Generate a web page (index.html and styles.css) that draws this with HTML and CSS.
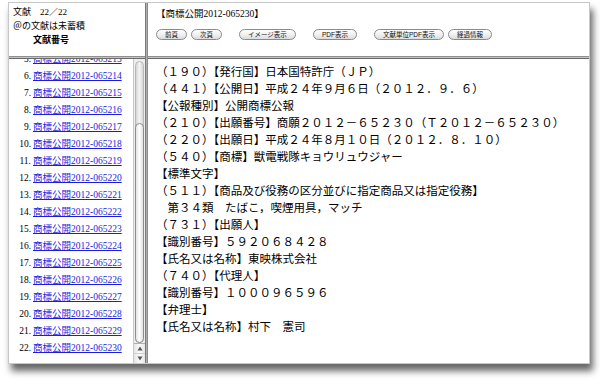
FILE: index.html
```html
<!DOCTYPE html>
<html lang="ja">
<head>
<meta charset="utf-8">
<link rel="stylesheet" href="styles.css">
</head>
<body>
<div class="window">
  <div class="left-col">
    <div class="doc-info">
      <div class="info-line">文献　22／22</div>
      <div class="info-line">＠の文献は未蓄積</div>
      <div class="info-line info-head">文献番号</div>
    </div>
    <div class="hdiv"></div>
    <div class="list-frame">
      <div class="list-view">
        <div class="list">
          <div class="item"><span class="num">5.</span><a class="doc-link" href="#">商標公開2012-065213</a></div>
          <div class="item"><span class="num">6.</span><a class="doc-link" href="#">商標公開2012-065214</a></div>
          <div class="item"><span class="num">7.</span><a class="doc-link" href="#">商標公開2012-065215</a></div>
          <div class="item"><span class="num">8.</span><a class="doc-link" href="#">商標公開2012-065216</a></div>
          <div class="item"><span class="num">9.</span><a class="doc-link" href="#">商標公開2012-065217</a></div>
          <div class="item"><span class="num">10.</span><a class="doc-link" href="#">商標公開2012-065218</a></div>
          <div class="item"><span class="num">11.</span><a class="doc-link" href="#">商標公開2012-065219</a></div>
          <div class="item"><span class="num">12.</span><a class="doc-link" href="#">商標公開2012-065220</a></div>
          <div class="item"><span class="num">13.</span><a class="doc-link" href="#">商標公開2012-065221</a></div>
          <div class="item"><span class="num">14.</span><a class="doc-link" href="#">商標公開2012-065222</a></div>
          <div class="item"><span class="num">15.</span><a class="doc-link" href="#">商標公開2012-065223</a></div>
          <div class="item"><span class="num">16.</span><a class="doc-link" href="#">商標公開2012-065224</a></div>
          <div class="item"><span class="num">17.</span><a class="doc-link" href="#">商標公開2012-065225</a></div>
          <div class="item"><span class="num">18.</span><a class="doc-link" href="#">商標公開2012-065226</a></div>
          <div class="item"><span class="num">19.</span><a class="doc-link" href="#">商標公開2012-065227</a></div>
          <div class="item"><span class="num">20.</span><a class="doc-link" href="#">商標公開2012-065228</a></div>
          <div class="item"><span class="num">21.</span><a class="doc-link" href="#">商標公開2012-065229</a></div>
          <div class="item"><span class="num">22.</span><a class="doc-link" href="#">商標公開2012-065230</a></div>
        </div>
      </div>
      <div class="scrollbar">
        <div class="track">
          <div class="thumb"></div>
        </div>
        <div class="arrow arrow-up"><svg width="6" height="5" viewBox="0 0 6 5"><path d="M3 0.5 L5.5 4.5 L0.5 4.5 Z" fill="#555"/></svg></div>
        <div class="arrow arrow-down"><svg width="6" height="5" viewBox="0 0 6 5"><path d="M0.5 0.5 L5.5 0.5 L3 4.5 Z" fill="#555"/></svg></div>
      </div>
    </div>
  </div>
  <div class="vdiv"></div>
  <div class="right-col">
    <div class="head-frame">
      <div class="doc-title">【商標公開2012-065230】</div>
      <div class="buttons">
        <button class="btn">前頁</button>
        <button class="btn gap-s">次頁</button>
        <button class="btn gap-l">イメージ表示</button>
        <button class="btn gap-l">PDF表示</button>
        <button class="btn gap-l">文献単位PDF表示</button>
        <button class="btn gap-s">経過情報</button>
      </div>
    </div>
    <div class="hdiv"></div>
    <div class="content-frame">
      <div class="line">（１９０）【発行国】日本国特許庁（ＪＰ）</div>
      <div class="line">（４４１）【公開日】平成２４年９月６日（２０１２．９．６）</div>
      <div class="line">【公報種別】公開商標公報</div>
      <div class="line">（２１０）【出願番号】商願２０１２－６５２３０（Ｔ２０１２－６５２３０）</div>
      <div class="line">（２２０）【出願日】平成２４年８月１０日（２０１２．８．１０）</div>
      <div class="line">（５４０）【商標】獣電戦隊キョウリュウジャー</div>
      <div class="line">【標準文字】</div>
      <div class="line">（５１１）【商品及び役務の区分並びに指定商品又は指定役務】</div>
      <div class="line">　第３４類　たばこ，喫煙用具，マッチ</div>
      <div class="line">（７３１）【出願人】</div>
      <div class="line">【識別番号】５９２０６８４２８</div>
      <div class="line">【氏名又は名称】東映株式会社</div>
      <div class="line">（７４０）【代理人】</div>
      <div class="line">【識別番号】１０００９６５９６</div>
      <div class="line">【弁理士】</div>
      <div class="line">【氏名又は名称】村下　憲司</div>
    </div>
  </div>
</div>
</body>
</html>
```

FILE: styles.css
```css
html, body {
  margin: 0;
  padding: 0;
  background: #ffffff;
}
body {
  width: 600px;
  height: 381px;
  overflow: hidden;
  font-family: "Liberation Serif", "Noto Sans CJK JP", serif;
  color: #000;
}
.window {
  margin: 2px 0 0 8px;
  width: 582px;
  height: 362px;
  box-sizing: border-box;
  border: 1px solid #c8c8c8;
  background: #fff;
  display: flex;
  box-shadow: 3px 7px 7px rgba(0, 0, 0, 0.6);
}
.left-col {
  width: 136px;
  display: flex;
  flex-direction: column;
}
.right-col {
  flex: 1;
  display: flex;
  flex-direction: column;
  min-width: 0;
}
.vdiv {
  width: 3px;
  background: #b0b0b0;
  border-left: 1px solid #7a7a7a;
  border-right: 1px solid #8a8a8a;
  box-sizing: border-box;
}
.hdiv {
  height: 3px;
  background: #c4c4c4;
  border-top: 1px solid #8f8f8f;
  border-bottom: 1px solid #6a6a6a;
  box-sizing: border-box;
}
.doc-info {
  height: 53px;
  box-sizing: border-box;
  padding: 3px 0 0 4px;
  font-size: 9px;
  line-height: 13.5px;
}
.info-head {
  font-weight: bold;
  padding-left: 20px;
  margin-top: 1px;
}
.list-frame {
  flex: 1;
  display: flex;
  min-height: 0;
}
.list-view {
  flex: 1;
  overflow: hidden;
  display: flex;
  flex-direction: column;
  justify-content: flex-end;
  padding-bottom: 6px;
}
.list {
  font-size: 9.5px;
  line-height: 17px;
}
.item {
  display: flex;
  white-space: nowrap;
}
.num {
  width: 22px;
  text-align: right;
  flex: none;
}
.doc-link {
  margin-left: 2px;
  color: #1c1ce0;
  text-decoration: underline;
}
.scrollbar {
  width: 12px;
  display: flex;
  flex-direction: column;
  background: #eeeeee;
  border-left: 1px solid #c8c8c8;
  box-sizing: border-box;
}
.track {
  flex: 1;
  margin: 2px 1px 0 1px;
  border-radius: 5px;
  background: linear-gradient(to right, #d6d6d6, #f4f4f4 50%, #d6d6d6);
  border: 1px solid #b8b8b8;
  display: flex;
  flex-direction: column;
  justify-content: flex-end;
}
.thumb {
  height: 218px;
  border-radius: 5px;
  border: 1px solid #8d8d8d;
  background: linear-gradient(to right, #e4e4e4, #ffffff 50%, #e0e0e0);
  margin: 0 -1px -1px -1px;
}
.arrow {
  height: 9px;
  display: flex;
  align-items: center;
  justify-content: center;
  background: linear-gradient(to right, #e6e6e6, #fafafa 50%, #e6e6e6);
}
.arrow-up {
  border-top: 1px solid #b0b0b0;
}
.arrow-down {
  border-top: 1px solid #d0d0d0;
}
.head-frame {
  height: 53px;
  box-sizing: border-box;
  padding: 5px 0 0 8px;
}
.doc-title {
  font-size: 9.5px;
  line-height: 13px;
}
.buttons {
  display: flex;
  margin-top: 8px;
}
.btn {
  height: 11px;
  padding: 0 8px;
  margin: 0;
  border: 1px solid #8a8a8a;
  border-radius: 6px;
  background: linear-gradient(#ffffff, #f0f0f0 50%, #dcdcdc);
  font-family: "Liberation Sans", "Noto Sans CJK JP", sans-serif;
  font-size: 6.5px;
  line-height: 9px;
  color: #111;
  box-sizing: border-box;
  white-space: nowrap;
}
.gap-s {
  margin-left: 4px;
}
.gap-l {
  margin-left: 17px;
}
.content-frame {
  flex: 1;
  padding: 4.5px 0 0 8px;
  font-size: 11.5px;
  line-height: 17px;
  overflow: hidden;
}
.line {
  white-space: nowrap;
}
```
